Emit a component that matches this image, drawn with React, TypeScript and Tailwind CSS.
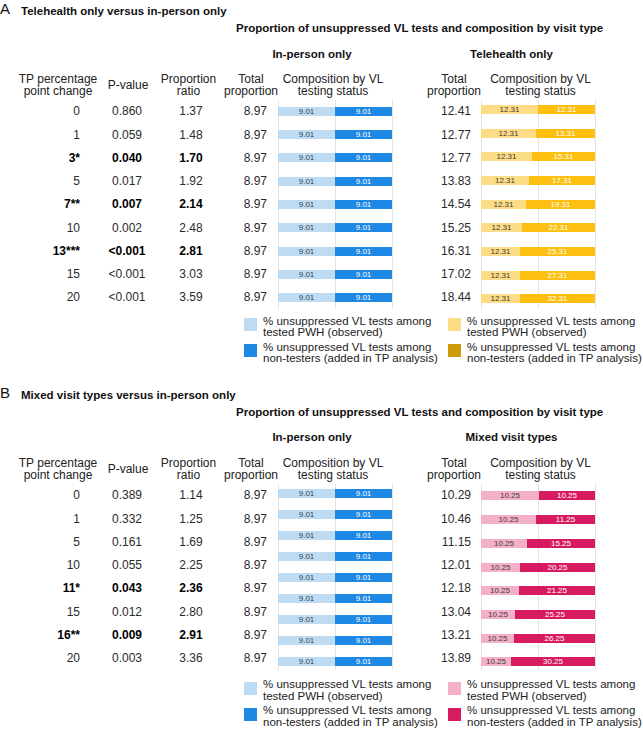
import React from 'react';

type Row = { tp: string; p: string; ratio: string; right: string; bold?: boolean };
type Bar = { a: string; b: string; w: number };

type PanelProps = {
  letter: string;
  title: string;
  rightTitle: string;
  rows: Row[];
  bodyH: string;
  blueCount: number;
  bluePad: string;
  bars: Bar[];
  barPad: string;
  lightCls: string;
  darkCls: string;
  legendLightCls: string;
  legendDarkCls: string;
  legendMt: string;
};

const gridBg =
  'bg-[repeating-linear-gradient(to_right,#e4e4e4_0px,#e4e4e4_1px,transparent_1px,transparent_57px)]';

function Head({ lines, className = '' }: { lines: string[]; className?: string }) {
  return (
    <div className={`flex h-[25px] flex-col justify-center whitespace-nowrap text-center text-[#222] ${className}`}>
      {lines.map((l) => (
        <div key={l}>{l}</div>
      ))}
    </div>
  );
}

function StackBar({ bar, lightCls, darkCls }: { bar: Bar; lightCls: string; darkCls: string }) {
  return (
    <div className="flex h-[9px] w-[114px] text-[8px] leading-[9px]">
      <div className={`${lightCls} text-center text-[#3d3d3d]`} style={{ width: bar.w }}>
        {bar.a}
      </div>
      <div className={`${darkCls} flex-1 text-center text-white`}>{bar.b}</div>
    </div>
  );
}

function LegendItem({ swatch, lines }: { swatch: string; lines: string[] }) {
  return (
    <div className="flex gap-[6px]">
      <div className={`mt-[2.5px] h-[13px] w-[13px] shrink-0 ${swatch}`} />
      <div className="whitespace-nowrap">
        {lines.map((l) => (
          <div key={l}>{l}</div>
        ))}
      </div>
    </div>
  );
}

function Panel(p: PanelProps) {
  const blueBar: Bar = { a: '9.01', b: '9.01', w: 57 };
  const cell = 'flex h-[23.25px] items-center';
  const strong = (b?: boolean) => (b ? 'font-bold text-black' : '');

  return (
    <section className="flex flex-col text-[#111]">
      <div className="flex h-[18px]">
        <div className="w-[21px] pt-[1px] text-[15px] leading-[15px]">{p.letter}</div>
        <h2 className="pt-[4px] text-[11.5px] font-bold leading-[14px]">{p.title}</h2>
      </div>
      <h3 className="mt-[3px] whitespace-nowrap pl-[236px] text-[11.5px] font-bold leading-[14px]">
        Proportion of unsuppressed VL tests and composition by visit type
      </h3>
      <div className="mt-[11.5px] flex pl-[224px] text-[11.5px] font-bold leading-[14px]">
        <div className="w-[169px] pl-[7px] text-center">In-person only</div>
        <div className="w-[34px]" />
        <div className="w-[169px] text-center">{p.rightTitle}</div>
      </div>

      <div className="mt-[12.4px] flex text-[12px] leading-[12.5px] text-[#2b2b2b]">
        <div className="w-[100px]">
          <Head lines={['TP percentage', 'point change']} className="pl-[16px]" />
          <div className="mt-[2px] flex flex-col">
            {p.rows.map((r, i) => (
              <div key={i} className={`${cell} justify-end pr-[20px] ${strong(r.bold)}`}>
                {r.tp}
              </div>
            ))}
          </div>
        </div>

        <div className="w-[56px]">
          <Head lines={['P-value']} />
          <div className="mt-[2px] flex flex-col">
            {p.rows.map((r, i) => (
              <div key={i} className={`${cell} justify-center pr-[2px] ${strong(r.bold)}`}>
                {r.p}
              </div>
            ))}
          </div>
        </div>

        <div className="w-[68px]">
          <Head lines={['Proportion', 'ratio']} className="pr-[3px]" />
          <div className="mt-[2px] flex flex-col">
            {p.rows.map((r, i) => (
              <div key={i} className={`${cell} justify-center pl-[2px] ${strong(r.bold)}`}>
                {r.ratio}
              </div>
            ))}
          </div>
        </div>

        <div className="w-[54px]">
          <Head lines={['Total', 'proportion']} />
          <div className="mt-[2px] flex flex-col">
            {p.rows.map((_, i) => (
              <div key={i} className={`${cell} justify-end pr-[11px]`}>
                8.97
              </div>
            ))}
          </div>
        </div>

        <div className="w-[115px]">
          <Head lines={['Composition by VL', 'testing status']} className="pr-[5px]" />
          <div className={`mt-[2px] flex ${p.bodyH} flex-col justify-between ${p.bluePad} ${gridBg}`}>
            {Array.from({ length: p.blueCount }).map((_, i) => (
              <StackBar key={i} bar={blueBar} lightCls="bg-[#bddcf4]" darkCls="bg-[#1e88e5]" />
            ))}
          </div>
        </div>

        <div className="w-[34px]" />

        <div className="w-[54px]">
          <Head lines={['Total', 'proportion']} />
          <div className="mt-[2px] flex flex-col">
            {p.rows.map((r, i) => (
              <div key={i} className={`${cell} justify-end pr-[10px]`}>
                {r.right}
              </div>
            ))}
          </div>
        </div>

        <div className="w-[115px]">
          <Head lines={['Composition by VL', 'testing status']} className="pl-[4px]" />
          <div className={`mt-[2px] flex ${p.bodyH} flex-col justify-between ${p.barPad} ${gridBg}`}>
            {p.bars.map((b, i) => (
              <StackBar key={i} bar={b} lightCls={p.lightCls} darkCls={p.darkCls} />
            ))}
          </div>
        </div>
      </div>

      <div className={`${p.legendMt} flex pl-[244px] text-[11.5px] leading-[11.5px] text-[#222]`}>
        <div className="flex w-[204px] flex-col gap-[3px]">
          <LegendItem swatch="bg-[#bddcf4]" lines={['% unsuppressed VL tests among', 'tested PWH (observed)']} />
          <LegendItem
            swatch="bg-[#1e88e5]"
            lines={['% unsuppressed VL tests among', 'non-testers (added in TP analysis)']}
          />
        </div>
        <div className="flex flex-col gap-[3px]">
          <LegendItem swatch={p.legendLightCls} lines={['% unsuppressed VL tests among', 'tested PWH (observed)']} />
          <LegendItem
            swatch={p.legendDarkCls}
            lines={['% unsuppressed VL tests among', 'non-testers (added in TP analysis)']}
          />
        </div>
      </div>
    </section>
  );
}

const rowsA: Row[] = [
  { tp: '0', p: '0.860', ratio: '1.37', right: '12.41' },
  { tp: '1', p: '0.059', ratio: '1.48', right: '12.77' },
  { tp: '3*', p: '0.040', ratio: '1.70', right: '12.77', bold: true },
  { tp: '5', p: '0.017', ratio: '1.92', right: '13.83' },
  { tp: '7**', p: '0.007', ratio: '2.14', right: '14.54', bold: true },
  { tp: '10', p: '0.002', ratio: '2.48', right: '15.25' },
  { tp: '13***', p: '<0.001', ratio: '2.81', right: '16.31', bold: true },
  { tp: '15', p: '<0.001', ratio: '3.03', right: '17.02' },
  { tp: '20', p: '<0.001', ratio: '3.59', right: '18.44' },
];

const barsA: Bar[] = [
  { a: '12.31', b: '12.31', w: 57 },
  { a: '12.31', b: '13.31', w: 55 },
  { a: '12.31', b: '15.31', w: 51 },
  { a: '12.31', b: '17.31', w: 48 },
  { a: '12.31', b: '19.31', w: 45 },
  { a: '12.31', b: '22.31', w: 41 },
  { a: '12.31', b: '25.31', w: 39 },
  { a: '12.31', b: '27.31', w: 39 },
  { a: '12.31', b: '32.31', w: 39 },
];

const rowsB: Row[] = [
  { tp: '0', p: '0.389', ratio: '1.14', right: '10.29' },
  { tp: '1', p: '0.332', ratio: '1.25', right: '10.46' },
  { tp: '5', p: '0.161', ratio: '1.69', right: '11.15' },
  { tp: '10', p: '0.055', ratio: '2.25', right: '12.01' },
  { tp: '11*', p: '0.043', ratio: '2.36', right: '12.18', bold: true },
  { tp: '15', p: '0.012', ratio: '2.80', right: '13.04' },
  { tp: '16**', p: '0.009', ratio: '2.91', right: '13.21', bold: true },
  { tp: '20', p: '0.003', ratio: '3.36', right: '13.89' },
];

const barsB: Bar[] = [
  { a: '10.25', b: '10.25', w: 58 },
  { a: '10.25', b: '11.25', w: 55 },
  { a: '10.25', b: '15.25', w: 46 },
  { a: '10.25', b: '20.25', w: 39 },
  { a: '10.25', b: '21.25', w: 38 },
  { a: '10.25', b: '25.25', w: 34 },
  { a: '10.25', b: '26.25', w: 33 },
  { a: '10.25', b: '30.25', w: 30 },
];

export default function App() {
  return (
    <div className="h-[731px] w-[643px] overflow-hidden bg-white font-['Liberation_Sans',Arial,sans-serif]">
      <Panel
        letter="A"
        title="Telehealth only versus in-person only"
        rightTitle="Telehealth only"
        rows={rowsA}
        bodyH="h-[209.25px]"
        blueCount={9}
        bluePad="pt-[7px] pb-[7px]"
        bars={barsA}
        barPad="pt-[5.3px] pb-[5.8px]"
        lightCls="bg-[#fddc86]"
        darkCls="bg-[#fdbf10]"
        legendLightCls="bg-[#fddc86]"
        legendDarkCls="bg-[#cf9a05]"
        legendMt="mt-[6.5px]"
      />
      <div className="h-[19.35px]" />
      <Panel
        letter="B"
        title="Mixed visit types versus in-person only"
        rightTitle="Mixed visit types"
        rows={rowsB}
        bodyH="h-[186px]"
        blueCount={9}
        bluePad="pt-[5px] pb-[3.7px]"
        bars={barsB}
        barPad="pt-[7.6px] pb-[3.4px]"
        lightCls="bg-[#f4afc9]"
        darkCls="bg-[#d81b60]"
        legendLightCls="bg-[#f4afc9]"
        legendDarkCls="bg-[#d81b60]"
        legendMt="mt-[9.5px]"
      />
    </div>
  );
}
